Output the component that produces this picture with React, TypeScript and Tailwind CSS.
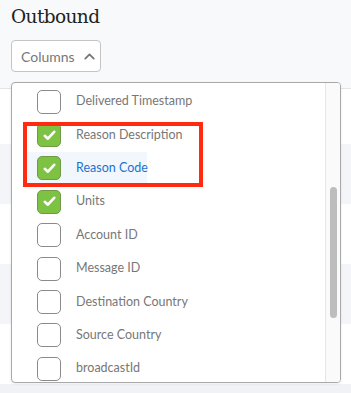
import { ChevronUp } from 'lucide-react';

const COLUMNS: { label: string; checked: boolean; active?: boolean }[] = [
  { label: 'Delivered Timestamp', checked: false },
  { label: 'Reason Description', checked: true },
  { label: 'Reason Code', checked: true, active: true },
  { label: 'Units', checked: true },
  { label: 'Account ID', checked: false },
  { label: 'Message ID', checked: false },
  { label: 'Destination Country', checked: false },
  { label: 'Source Country', checked: false },
  { label: 'broadcastId', checked: false },
];

function Checkbox({ checked }: { checked: boolean }) {
  if (checked) {
    return (
      <span className="flex h-[24px] w-[24px] shrink-0 items-center justify-center rounded-[5px] border border-[#6e9a45] bg-[#7dc242]">
        <svg width="13" height="11" viewBox="0 0 13 11" fill="none">
          <path d="M1.8 5.8 L4.9 8.7 L11.2 1.8" stroke="white" strokeWidth="2.6" strokeLinecap="round" strokeLinejoin="round" />
        </svg>
      </span>
    );
  }
  return <span className="h-[24px] w-[24px] shrink-0 rounded-[5px] border border-[#8a8a8a] bg-white" />;
}

export default function App() {
  return (
    <div className="relative h-[393px] w-[351px] overflow-hidden bg-[#f8f9fa] font-['Lato','Noto_Sans',sans-serif]">
      <h1 className="pl-[11px] pt-[3px] font-['DejaVu_Serif',serif] text-[18.5px] leading-[27px] tracking-[-0.6px] text-[#222]">Outbound</h1>

      <button className="ml-[11px] mt-[10px] flex h-[32px] w-[90px] items-center gap-[6px] rounded-[4px] border border-[#c4c4c4] bg-white pl-[9px] text-[14px] text-[#777]">
        Columns
        <ChevronUp size={17} strokeWidth={2.6} className="text-[#777]" />
      </button>

      {/* table behind the menu */}
      <div className="mt-[16px] border-t border-[#e2e4e7]">
        <div className="h-[55px] bg-white" />
        <div className="h-[60px] bg-[#f3f5f8]" />
        <div className="h-[60px] bg-white" />
        <div className="h-[60px] bg-[#f3f5f8]" />
        <div className="h-[60px] bg-white" />
        <div className="h-[20px] bg-[#f0f2f5]" />
      </div>

      <div className="absolute left-[11px] top-[82px] flex h-[301px] w-[330px] overflow-hidden rounded-[4px] border border-[#a9a9a9] bg-white shadow-[0_1px_3px_rgba(0,0,0,0.08)]">
        <ul className="flex-1 pt-[2px]">
          {COLUMNS.map((c) => (
            <li key={c.label} className="flex h-[33.4px] items-center pl-[25px]">
              <div className={`-ml-[10px] flex h-full items-center gap-[15px] pl-[10px] pr-[2px] ${c.active ? 'w-[120px] bg-[#f2f7fd]' : ''}`}>
                <Checkbox checked={c.checked} />
                <span className={`whitespace-nowrap text-[12.5px] ${c.active ? 'text-[#1a73d0]' : 'text-[#777]'}`}>{c.label}</span>
              </div>
            </li>
          ))}
        </ul>
        <div className="w-[15px] border-l border-[#e6e6e6] bg-[#fafafa] pt-[104px]">
          <div className="mx-auto h-[131px] w-[7px] rounded-full bg-[#bdbdbd]" />
        </div>
      </div>

      {/* highlight box */}
      <div className="absolute left-[23px] top-[122px] h-[65px] w-[180px] border-[4px] border-[#ff2a10]" />
    </div>
  );
}
